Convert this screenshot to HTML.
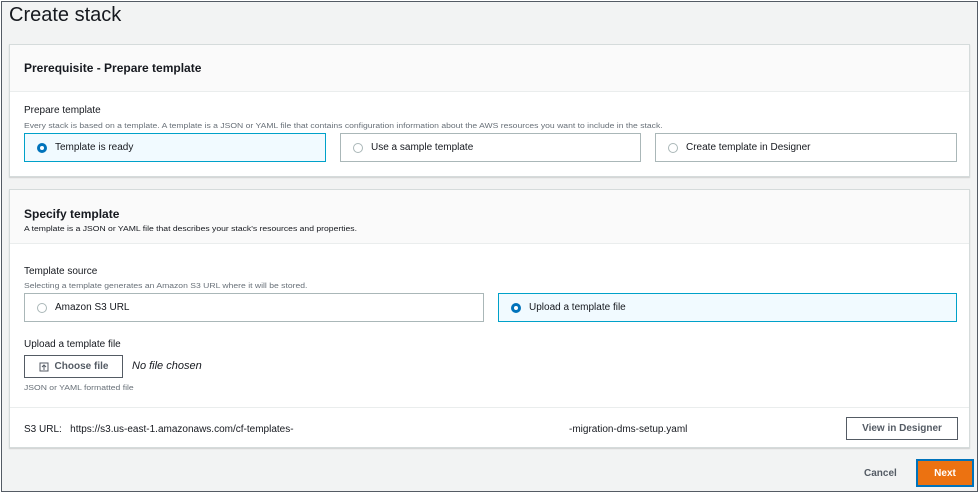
<!DOCTYPE html>
<html><head><style>
*{box-sizing:border-box;margin:0;padding:0}
body{width:979px;height:493px;background:#fff;font-family:"Liberation Sans",sans-serif;color:#16191f;position:relative;overflow:hidden}
.frame{position:absolute;left:1px;top:1px;width:977px;height:491px;border:1px solid #545b64;background:#f2f3f3}
.a{position:absolute}
.panel{position:absolute;left:7px;width:961px;background:#fff;border:1px solid #d5dbdb;box-shadow:0 1px 1px rgba(0,0,0,.15)}
.hd{background:#fafafa;border-bottom:1px solid #eaeded}
.opt{position:absolute;height:29px;border:1px solid #aab7b8;font-size:10px;line-height:10px;display:flex;align-items:center;padding-left:12px}
.opt.sel{background:#f1faff;border-color:#00a1c9}
.r{width:10px;height:10px;border-radius:50%;border:1px solid #aab7b8;margin-right:8px;background:#fff;flex:none}
.sel .r{border:3px solid #0073bb}
.lbl{font-size:10px}
.sm{font-size:8.6px;color:#687078;white-space:nowrap;transform-origin:0 0;transform:scaleY(.85)}
.btn{position:absolute;border:1px solid #545b64;background:#fff;font-size:10px;line-height:10px;font-weight:bold;color:#545b64;display:flex;align-items:center;justify-content:center}
</style></head><body>
<div class="frame">
<div class="a" style="left:7px;top:2px;font-size:20px;color:#16191f">Create stack</div>
<div class="panel" style="top:42px;height:133px">
 <div class="hd" style="height:47px;padding:16px 14px;font-size:12px;font-weight:bold">Prerequisite - Prepare template</div>
 <div class="a lbl" style="left:14px;top:60px">Prepare template</div>
 <div class="a sm" style="left:14px;top:76px">Every stack is based on a template. A template is a JSON or YAML file that contains configuration information about the AWS resources you want to include in the stack.</div>
 <div class="opt sel" style="left:14px;top:88px;width:302px"><span class="r"></span>Template is ready</div>
 <div class="opt" style="left:330px;top:88px;width:301px"><span class="r"></span>Use a sample template</div>
 <div class="opt" style="left:645px;top:88px;width:302px"><span class="r"></span>Create template in Designer</div>
</div>
<div class="panel" style="top:187px;height:259px">
 <div class="hd" style="height:54px;padding:17px 14px 0;">
  <div style="font-size:12px;font-weight:bold">Specify template</div>
  <div class="sm" style="color:#16191f;margin-top:3px">A template is a JSON or YAML file that describes your stack's resources and properties.</div>
 </div>
 <div class="a lbl" style="left:14px;top:76px">Template source</div>
 <div class="a sm" style="left:14px;top:91px">Selecting a template generates an Amazon S3 URL where it will be stored.</div>
 <div class="opt" style="left:14px;top:103px;width:460px"><span class="r"></span>Amazon S3 URL</div>
 <div class="opt sel" style="left:488px;top:103px;width:459px"><span class="r"></span>Upload a template file</div>
 <div class="a lbl" style="left:14px;top:149px">Upload a template file</div>
 <div class="btn" style="left:14px;top:165px;width:99px;height:23px"><svg width="10" height="10" viewBox="0 0 10 10" style="margin-right:6px"><rect x="1" y="1" width="8" height="8" fill="none" stroke="#545b64"/><path d="M5 8V3M3 5l2-2 2 2" fill="none" stroke="#545b64"/></svg>Choose file</div>
 <div class="a" style="left:122px;top:170px;font-size:11px;font-style:italic">No file chosen</div>
 <div class="a sm" style="left:14px;top:193px">JSON or YAML formatted file</div>
 <div class="a" style="left:0;top:217px;width:959px;border-top:1px solid #eaeded"></div>
 <div class="a lbl" style="left:14px;top:234px">S3 URL:&nbsp;&nbsp; https://s3.us-east-1.amazonaws.com/cf-templates-</div>
 <div class="a lbl" style="left:559px;top:234px">-migration-dms-setup.yaml</div>
 <div class="btn" style="left:836px;top:227px;width:112px;height:23px">View in Designer</div>
</div>
<div class="a" style="left:862px;top:466px;font-size:10px;font-weight:bold;color:#545b64">Cancel</div>
<div class="a" style="left:914px;top:457px;width:58px;height:28px;background:#ec7211;border:2px solid #0073bb;color:#fff;font-size:10px;font-weight:bold;display:flex;align-items:center;justify-content:center">Next</div>
</div>
</body></html>
